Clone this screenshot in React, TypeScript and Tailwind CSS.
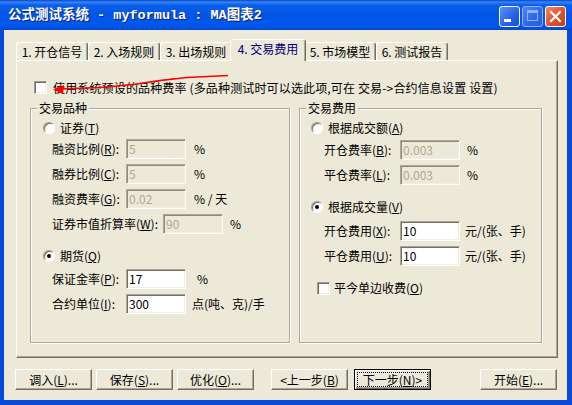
import React from 'react';

function U({ c }: { c: string }) {
  return <span className="underline underline-offset-[1px]">{c}</span>;
}

function Radio({ checked }: { checked?: boolean }) {
  return (
    <div className="w-[12px] h-[12px] shrink-0 rounded-full bg-white border border-t-[#9c9a8c] border-l-[#9c9a8c] border-r-white border-b-white shadow-[inset_1px_1px_0_#716f64] flex items-center justify-center">
      {checked && <div className="w-[4px] h-[4px] rounded-full bg-black" />}
    </div>
  );
}

function Check() {
  return (
    <div className="w-[13px] h-[13px] shrink-0 bg-white border border-t-[#9c9a8c] border-l-[#9c9a8c] border-r-white border-b-white shadow-[inset_1px_1px_0_#716f64,inset_-1px_-1px_0_#f1efe2]" />
  );
}

function Field({ value, disabled }: { value: string; disabled?: boolean }) {
  return (
    <div
      className={
        disabled
          ? 'h-[20px] w-[60px] shrink-0 flex items-center pl-[2px] bg-[#ece9d8] text-[#aca899] border border-t-[#aca899] border-l-[#aca899] border-r-white border-b-white shadow-[inset_1px_1px_0_#8c8a7c,inset_-1px_-1px_0_#f1efe2]'
          : 'h-[20px] w-[60px] shrink-0 flex items-center pl-[2px] bg-white text-black border border-t-[#aca899] border-l-[#aca899] border-r-white border-b-white shadow-[inset_1px_1px_0_#716f64,inset_-1px_-1px_0_#f1efe2]'
      }
    >
      {value}
    </div>
  );
}

function Btn({ children, def, className }: { children: React.ReactNode; def?: boolean; className?: string }) {
  if (def) {
    return (
      <div className={'w-[77px] h-[21px] shrink-0 bg-[#ece9d8] border border-black shadow-[inset_1px_1px_0_white,inset_-1px_-1px_0_#716f64,inset_-2px_-2px_0_#aca899] p-[2px] ' + (className ?? '')}>
        <div className="w-full h-full border border-dotted border-black flex items-center justify-center whitespace-nowrap">{children}</div>
      </div>
    );
  }
  return (
    <div className={'w-[77px] h-[21px] shrink-0 bg-[#ece9d8] border border-t-white border-l-white border-r-[#716f64] border-b-[#716f64] shadow-[inset_-1px_-1px_0_#aca899] flex items-center justify-center whitespace-nowrap ' + (className ?? '')}>
      {children}
    </div>
  );
}

function Tab({ label, active }: { label: string; active?: boolean }) {
  if (active) {
    return (
      <div className="relative z-10 h-[22px] w-[76px] -ml-[2px] -mr-[2px] -mb-[1px] bg-[#ece9d8] border-t border-l border-r border-t-white border-l-white border-r-[#716f64] rounded-t-[3px] shadow-[inset_-1px_0_0_#aca899] flex items-start justify-center pt-[2px] text-[#000080] whitespace-pre">
        {label}
      </div>
    );
  }
  return (
    <div className="h-[18px] w-[72px] bg-[#ece9d8] border-t border-l border-r border-t-white border-l-white border-r-[#716f64] rounded-t-[3px] shadow-[inset_-1px_0_0_#aca899] flex items-center justify-center whitespace-pre">
      {label}
    </div>
  );
}

function Group({ title, className, children }: { title: string; className: string; children: React.ReactNode }) {
  return (
    <div className={'relative border border-[#aca899] shadow-[1px_1px_0_white,inset_1px_1px_0_white] ' + className}>
      <span className="absolute left-[6px] top-[-8px] px-[2px] bg-[#ece9d8] leading-[14px]">{title}</span>
      {children}
    </div>
  );
}

export default function App() {
  return (
    <div className="relative w-[572px] h-[405px] overflow-hidden bg-[#0a4ad8] flex flex-col font-['Noto_Sans_CJK_SC',sans-serif] text-[12px] leading-[14px] text-black">
      {/* Title bar */}
      <div className="h-[30px] shrink-0 flex items-start pl-[8px] pr-[6px] bg-[linear-gradient(180deg,#0842c4_0px,#3585f7_2px,#0b60ea_5px,#0055e6_50%,#0058ec_85%,#0048d4_100%)]">
        <div className="mt-[8px] leading-[16px] text-[13.5px] font-bold text-white font-['Liberation_Mono','Noto_Sans_CJK_SC',monospace] whitespace-pre [text-shadow:1px_1px_0_#0a1f80]">
          公式测试系统 - myformula : MA图表2
        </div>
        <div className="flex-1" />
        <div className="mt-[6px] flex gap-[2px]">
          <div className="relative w-[21px] h-[21px] rounded-[3px] border border-white bg-[linear-gradient(135deg,#5a95f8,#2461e6_60%,#1a4fd8)]">
            <div className="absolute left-[4px] top-[12px] w-[7px] h-[3px] bg-white" />
          </div>
          <div className="relative w-[21px] h-[21px] rounded-[3px] border border-[#8eb0f6] bg-[linear-gradient(135deg,#4d86f3,#2d66e6_60%,#275ee0)]">
            <div className="absolute left-[4px] top-[3px] w-[11px] h-[11px] border border-t-[3px] border-[#8eb0f6]" />
          </div>
          <div className="relative w-[21px] h-[21px] rounded-[3px] border border-white bg-[linear-gradient(135deg,#f08a66,#e0502a_55%,#c8401e)]">
            <svg className="absolute left-0 top-0" width="19" height="19" viewBox="0 0 19 19">
              <path d="M5 5 L14 14 M14 5 L5 14" stroke="white" strokeWidth="2.2" strokeLinecap="square" />
            </svg>
          </div>
        </div>
      </div>

      {/* Client area */}
      <div className="flex-1 ml-[4px] mr-[5px] mb-[5px] bg-[#ece9d8] flex flex-col pl-[12px] pr-[9px] pt-[9px]">
        {/* Tabs */}
        <div className="h-[21px] flex items-end">
          <Tab label="1. 开仓信号" />
          <Tab label="2. 入场规则" />
          <Tab label="3. 出场规则" />
          <Tab label="4. 交易费用" active />
          <Tab label="5. 市场模型" />
          <Tab label="6. 测试报告" />
        </div>

        {/* Panel */}
        <div className="h-[298px] w-[542px] border border-t-white border-l-white border-r-[#716f64] border-b-[#716f64] shadow-[inset_-1px_-1px_0_#aca899] flex flex-col pl-[13px] pt-[20px]">
          <div className="flex items-center h-[13px] ml-[4px] gap-[6px] whitespace-nowrap">
            <Check />
            <span className="tracking-[0.15px]">使用系统预设的品种费率 (多品种测试时可以选此项,可在 交易-&gt;合约信息设置 设置)</span>
          </div>

          <div className="flex gap-[9px] mt-[14px]">
            {/* Left group */}
            <Group title="交易品种" className="w-[260px] h-[235px] flex flex-col pl-[12px] pt-[11px]">
              <div className="flex items-center h-[16px] gap-[5px]">
                <Radio />
                <span>证券(<U c="T" />)</span>
              </div>
              <div className="flex flex-col gap-[5px] mt-[3px] ml-[9px]">
                <div className="flex items-center h-[20px]">
                  <span className="w-[74px] whitespace-nowrap">融资比例(<U c="R" />):</span>
                  <Field value="5" disabled />
                  <span className="ml-[8px]">%</span>
                </div>
                <div className="flex items-center h-[20px]">
                  <span className="w-[74px] whitespace-nowrap">融券比例(<U c="C" />):</span>
                  <Field value="5" disabled />
                  <span className="ml-[8px]">%</span>
                </div>
                <div className="flex items-center h-[20px]">
                  <span className="w-[74px] whitespace-nowrap">融资费率(<U c="G" />):</span>
                  <Field value="0.02" disabled />
                  <span className="ml-[8px] whitespace-pre">% / 天</span>
                </div>
                <div className="flex items-center h-[20px]">
                  <span className="w-[111px] whitespace-nowrap">证券市值折算率(<U c="W" />):</span>
                  <Field value="90" disabled />
                  <span className="ml-[7px]">%</span>
                </div>
              </div>
              <div className="flex items-center h-[16px] gap-[5px] mt-[14px]">
                <Radio checked />
                <span>期货(<U c="Q" />)</span>
              </div>
              <div className="flex flex-col gap-[5px] mt-[5px] ml-[9px]">
                <div className="flex items-center h-[20px]">
                  <span className="w-[74px] whitespace-nowrap">保证金率(<U c="P" />):</span>
                  <Field value="17" />
                  <span className="ml-[11px]">%</span>
                </div>
                <div className="flex items-center h-[20px]">
                  <span className="w-[74px] whitespace-nowrap">合约单位(<U c="I" />):</span>
                  <Field value="300" />
                  <span className="ml-[6px] whitespace-nowrap">点(吨、克)/手</span>
                </div>
              </div>
            </Group>

            {/* Right group */}
            <Group title="交易费用" className="w-[243px] h-[235px] flex flex-col pl-[11px] pt-[11px]">
              <div className="flex items-center h-[16px] gap-[5px]">
                <Radio />
                <span>根据成交额(<U c="A" />)</span>
              </div>
              <div className="flex flex-col gap-[5px] mt-[4px] ml-[13px]">
                <div className="flex items-center h-[20px]">
                  <span className="w-[76px] whitespace-nowrap">开仓费率(<U c="B" />):</span>
                  <Field value="0.003" disabled />
                  <span className="ml-[7px]">%</span>
                </div>
                <div className="flex items-center h-[20px]">
                  <span className="w-[76px] whitespace-nowrap">平仓费率(<U c="L" />):</span>
                  <Field value="0.003" disabled />
                  <span className="ml-[7px]">%</span>
                </div>
              </div>
              <div className="flex items-center h-[16px] gap-[5px] mt-[14px]">
                <Radio checked />
                <span>根据成交量(<U c="V" />)</span>
              </div>
              <div className="flex flex-col gap-[5px] mt-[6px] ml-[13px]">
                <div className="flex items-center h-[20px]">
                  <span className="w-[76px] whitespace-nowrap">开仓费用(<U c="X" />):</span>
                  <Field value="10" />
                  <span className="ml-[5px] whitespace-nowrap">元/(张、手)</span>
                </div>
                <div className="flex items-center h-[20px]">
                  <span className="w-[76px] whitespace-nowrap">平仓费用(<U c="U" />):</span>
                  <Field value="10" />
                  <span className="ml-[5px] whitespace-nowrap">元/(张、手)</span>
                </div>
              </div>
              <div className="flex items-center h-[16px] gap-[4px] mt-[14px] ml-[6px]">
                <Check />
                <span>平今单边收费(<U c="O" />)</span>
              </div>
            </Group>
          </div>
        </div>

        {/* Bottom buttons */}
        <div className="flex mt-[11px] -ml-[1px]">
          <Btn>调入(<U c="L" />)...</Btn>
          <Btn className="ml-[4px]">保存(<U c="S" />)...</Btn>
          <Btn className="ml-[4px]">优化(<U c="O" />)...</Btn>
          <Btn className="ml-[17px]">&lt;上一步(<U c="B" />)</Btn>
          <Btn def className="ml-[6px]">下一步(<U c="N" />)&gt;</Btn>
          <Btn className="ml-[49px]">开始(<U c="E" />)...</Btn>
        </div>
      </div>

      {/* Red annotation arrow drawn over the dialog */}
      <svg className="absolute left-0 top-0 pointer-events-none" width="572" height="405" viewBox="0 0 572 405">
        <path d="M60 89 L100 87.5 L133 84.5 L160 80.5 L187 77.5 L228 75.5" stroke="#ff0000" strokeWidth="1.4" fill="none" />
        <path d="M150 82 L176 78.5" stroke="#ff0000" strokeWidth="1" fill="none" />
        <path d="M53 89.5 L64 85 L63 94 Z" fill="#ff0000" />
      </svg>
    </div>
  );
}
